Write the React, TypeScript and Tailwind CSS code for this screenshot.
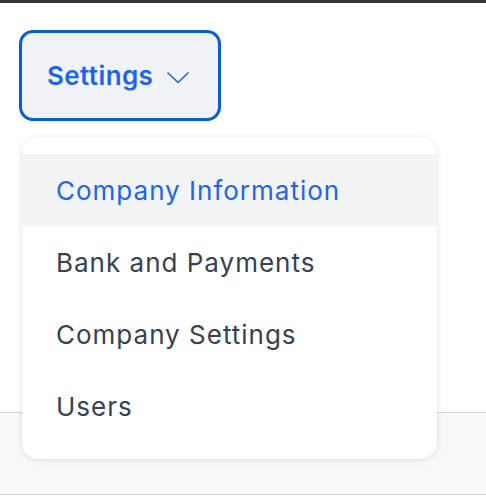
import React from 'react';

const items = ['Company Information', 'Bank and Payments', 'Company Settings', 'Users'];

export default function App() {
  const active = 0;
  return (
    <div className="relative h-[498px] w-full overflow-hidden bg-white" style={{ fontFamily: 'Inter, "Noto Sans", sans-serif' }}>
      <div className="h-[3px] bg-[#343434]" />
      <div className="h-[409px] px-[19px] pt-[27px]">
        <button className="flex h-[91px] w-[202px] items-center gap-[13px] rounded-[14px] border-[3px] border-[#0760d0] bg-[#f1f2f5] pl-[25px] text-[26px] font-semibold tracking-[0.4px] text-[#1d64ef]">
          Settings
          <svg width="24" height="13" viewBox="0 0 24 13" fill="none" className="mt-[3px]">
            <path d="M1.5 1.5 L12 11.5 L22.5 1.5" stroke="#1d64ef" strokeWidth="1.6" />
          </svg>
        </button>
      </div>
      <div className="h-[83px] border-y border-[#d2d3da] bg-[#f8f9fb]" />

      <div className="absolute left-[22px] top-[137px] w-[415px] rounded-2xl bg-white py-[17px] shadow-[0_1px_6px_rgba(0,0,0,0.12)]">
        {items.map((item, i) => (
          <div
            key={item}
            className={`flex h-[72px] items-center px-[34px] text-[26px] tracking-[1px] ${
              i === active ? 'bg-[#f2f3f5] text-[#1d64ef]' : 'text-[#374151]'
            }`}
          >
            {item}
          </div>
        ))}
      </div>
    </div>
  );
}
